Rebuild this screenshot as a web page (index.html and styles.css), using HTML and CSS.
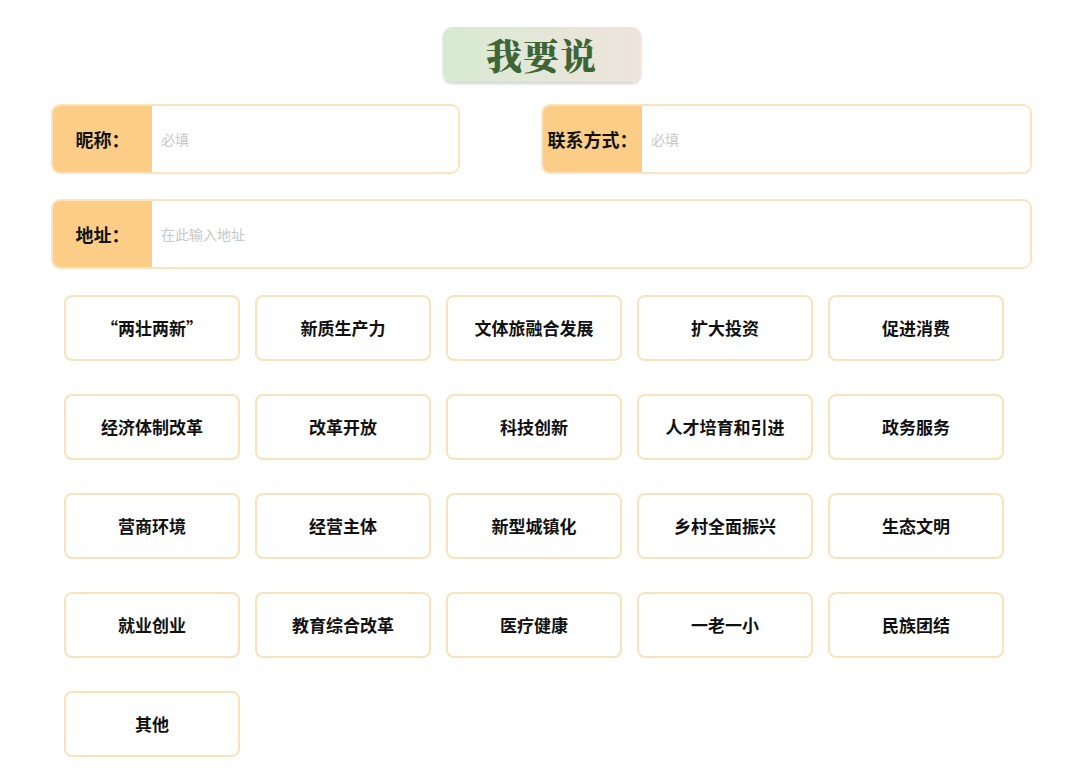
FILE: index.html
```html
<!DOCTYPE html>
<html lang="zh">
<head>
<meta charset="utf-8">
<link rel="stylesheet" href="styles.css">
</head>
<body>
<div class="page">
  <div class="title-wrap"><div class="title">我要说</div></div>
  <div class="row two">
    <div class="field short"><div class="label">昵称：</div><div class="input">必填</div></div>
    <div class="field long"><div class="label">联系方式：</div><div class="input">必填</div></div>
  </div>
  <div class="row">
    <div class="field"><div class="label">地址：</div><div class="input">在此输入地址</div></div>
  </div>
  <div class="tags">
    <div class="tag">“两壮两新”</div>
    <div class="tag">新质生产力</div>
    <div class="tag">文体旅融合发展</div>
    <div class="tag">扩大投资</div>
    <div class="tag">促进消费</div>
    <div class="tag">经济体制改革</div>
    <div class="tag">改革开放</div>
    <div class="tag">科技创新</div>
    <div class="tag">人才培育和引进</div>
    <div class="tag">政务服务</div>
    <div class="tag">营商环境</div>
    <div class="tag">经营主体</div>
    <div class="tag">新型城镇化</div>
    <div class="tag">乡村全面振兴</div>
    <div class="tag">生态文明</div>
    <div class="tag">就业创业</div>
    <div class="tag">教育综合改革</div>
    <div class="tag">医疗健康</div>
    <div class="tag">一老一小</div>
    <div class="tag">民族团结</div>
    <div class="tag">其他</div>
  </div>
</div>
</body>
</html>
```
FILE: styles.css
```css
html, body {
  margin: 0;
  padding: 0;
  background: #ffffff;
  font-family: "Noto Sans CJK SC", "Noto Sans", sans-serif;
  color: #111;
}
.page {
  width: 981px;
  margin-left: 51px;
  padding-top: 27px;
}
.title-wrap {
  display: flex;
  justify-content: center;
}
.title {
  width: 198px;
  height: 55px;
  border-radius: 9px;
  background: linear-gradient(90deg, #d6ead2 0%, #e6e6d8 60%, #eee4dc 100%);
  box-shadow: 0 2px 3px rgba(0,0,0,0.18);
  display: flex;
  align-items: center;
  justify-content: center;
  font-family: "Noto Serif CJK SC", "Noto Sans CJK SC", serif;
  font-size: 36px;
  font-weight: 900;
  color: #3d6537;
  letter-spacing: 1px;
  line-height: 1;
}
.row {
  display: flex;
  margin-top: 22px;
}
.row.two {
  gap: 81px;
}
.row + .row {
  margin-top: 25px;
}
.field {
  flex: 1;
  height: 70px;
  display: flex;
  border: 2px solid #fde3bd;
  border-radius: 9px;
  overflow: hidden;
  box-sizing: border-box;
}
.field.short {
  flex: none;
  width: 409px;
}
.field.long {
  flex: none;
  width: 491px;
}
.label {
  width: 99px;
  flex: none;
  background: #fccd87;
  display: flex;
  align-items: center;
  justify-content: center;
  font-size: 18px;
  font-weight: 700;
  color: #111;
  white-space: nowrap;
}
.input {
  flex: 1;
  display: flex;
  align-items: center;
  padding-left: 9px;
  font-size: 14px;
  color: #c8c8c8;
  background: #fff;
}
.tags {
  display: grid;
  grid-template-columns: repeat(5, 176px);
  column-gap: 15px;
  row-gap: 33px;
  margin-top: 26px;
  margin-left: 13px;
}
.tag {
  height: 66px;
  box-sizing: border-box;
  border: 2px solid #f8e3ba;
  border-radius: 8px;
  display: flex;
  align-items: center;
  justify-content: center;
  font-size: 17px;
  font-weight: 700;
  color: #111;
  padding-bottom: 2px;
}
```
